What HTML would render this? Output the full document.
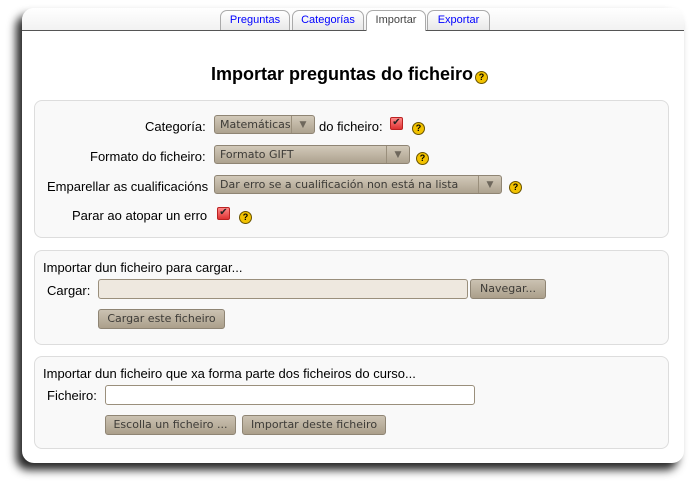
<!DOCTYPE html><html><head><style>
body{margin:0;width:691px;height:486px;background:#fff;position:relative;font-family:"Liberation Sans",sans-serif;font-size:13px;overflow:hidden}
.win{position:absolute;left:22px;top:8px;width:662px;height:455px;background:#fff;border-radius:12px;box-shadow:-6px 7px 9px rgba(0,0,0,.85);overflow:hidden}
.strip{position:absolute;left:0;top:0;width:662px;height:22px;background:linear-gradient(#fff,#f2f2f2);border-bottom:1px solid #555}
.tab{position:absolute;top:2px;height:19px;border:1px solid #aaa;border-bottom:none;border-radius:7px 7px 0 0;background:linear-gradient(#fff,#e8e8e8);color:#00f;font-size:11px;text-align:center;line-height:19px}
.a{position:absolute;white-space:nowrap}
.fs{position:absolute;left:12px;width:633px;background:#f9f9f9;border:1px solid #ddd;border-radius:8px}
.sel{position:absolute;height:19px;border:1px solid #8f8574;border-radius:3px;background:linear-gradient(#d2c9b9,#ada28f);color:#3d3b37;font-family:"DejaVu Sans",sans-serif;font-size:11px;line-height:18px;padding-left:5px;box-sizing:border-box}
.sel i{position:absolute;right:0;top:0;width:22px;height:17px;border-left:1px solid #9a8f7c;font-style:normal;color:#6e675c;font-size:9px;text-align:center}
.btn{position:absolute;height:20px;border:1px solid #8f8574;border-radius:3px;background:linear-gradient(#cbc2b2,#ab9f8b);color:#3d3b37;font-family:"DejaVu Sans",sans-serif;font-size:11px;line-height:18px;text-align:center;box-sizing:border-box}
.q{position:absolute;width:11px;height:11px;border-radius:50%;background:#f2c200;border:1px solid #6a5400;font-size:9px;font-weight:bold;text-align:center;line-height:11px;color:#000}
.cb{position:absolute;width:11px;height:11px;border-radius:2px;background:linear-gradient(#f88,#d33);border:1px solid #b22;color:#222;font-size:10px;line-height:10px;text-align:center}
.inp{position:absolute;height:20px;border:1px solid #9a8f7c;border-radius:3px;box-sizing:border-box}
</style></head><body>
<div class="win">
<div class="strip"></div>
<div class="tab" style="left:198px;width:68px">Preguntas</div>
<div class="tab" style="left:270px;width:70px">Categorías</div>
<div class="tab" style="left:344px;width:58px;color:#444;background:#fff;height:20px">Importar</div>
<div class="tab" style="left:405px;width:61px">Exportar</div>
<div class="a" style="left:189px;top:56px;font-size:18px;font-weight:bold">Importar preguntas do ficheiro</div>
<div class="q" style="left:453px;top:63px">?</div>

<div class="fs" style="top:92px;height:136px"></div>
<div class="a" style="left:123px;top:111px">Categoría:</div>
<div class="sel" style="left:192px;top:107px;width:101px">Matemáticas<i>▼</i></div>
<div class="a" style="left:297px;top:111px">do ficheiro:</div>
<div class="cb" style="left:368px;top:109px">✔</div>
<div class="q" style="left:390px;top:114px">?</div>
<div class="a" style="left:68px;top:141px">Formato do ficheiro:</div>
<div class="sel" style="left:192px;top:137px;width:196px">Formato GIFT<i>▼</i></div>
<div class="q" style="left:394px;top:144px">?</div>
<div class="a" style="left:25px;top:171px">Emparellar as cualificacións</div>
<div class="sel" style="left:192px;top:167px;width:288px">Dar erro se a cualificación non está na lista<i>▼</i></div>
<div class="q" style="left:487px;top:173px">?</div>
<div class="a" style="left:50px;top:200px">Parar ao atopar un erro</div>
<div class="cb" style="left:195px;top:199px">✔</div>
<div class="q" style="left:217px;top:203px">?</div>

<div class="fs" style="top:242px;height:93px"></div>
<div class="a" style="left:21px;top:252px">Importar dun ficheiro para cargar...</div>
<div class="a" style="left:25px;top:275px">Cargar:</div>
<div class="inp" style="left:76px;top:271px;width:370px;background:#eee8df"></div>
<div class="btn" style="left:448px;top:271px;width:76px">Navegar...</div>
<div class="btn" style="left:76px;top:301px;width:127px">Cargar este ficheiro</div>

<div class="fs" style="top:348px;height:91px"></div>
<div class="a" style="left:21px;top:358px">Importar dun ficheiro que xa forma parte dos ficheiros do curso...</div>
<div class="a" style="left:25px;top:380px">Ficheiro:</div>
<div class="inp" style="left:83px;top:377px;width:370px;background:#fff"></div>
<div class="btn" style="left:83px;top:407px;width:131px">Escolla un ficheiro ...</div>
<div class="btn" style="left:220px;top:407px;width:144px">Importar deste ficheiro</div>
</div>
</body></html>
